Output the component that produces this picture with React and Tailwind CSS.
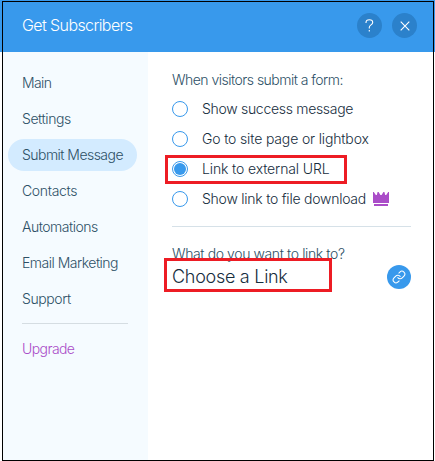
const navItems = [
  { label: "Main", tracking: "tracking-[-0.6px]" },
  { label: "Settings", tracking: "tracking-[-0.42px]" },
  { label: "Submit Message", tracking: "tracking-[-0.54px]", active: true },
  { label: "Contacts", tracking: "tracking-[-0.34px]" },
  { label: "Automations", tracking: "tracking-[-0.48px]" },
  { label: "Email Marketing", tracking: "tracking-[-0.5px]" },
  { label: "Support", tracking: "tracking-[-0.42px]" },
];

const options = [
  { label: "Show success message", tracking: "tracking-[-0.3px]" },
  { label: "Go to site page or lightbox", tracking: "tracking-[-0.15px]" },
  { label: "Link to external URL", tracking: "tracking-[-0.13px]", selected: true },
  { label: "Show link to file download", tracking: "tracking-[-0.24px]", premium: true },
];

function Header() {
  return (
    <header className="flex h-[52px] shrink-0 items-center bg-[#3899ec] pl-[22px] pr-[18px] text-white">
      <h1 className="grow whitespace-nowrap pb-[3px] text-[16px] font-light leading-6 tracking-[-0.6px]">Get Subscribers</h1>
      <div className="flex gap-[10px] pb-px">
        <button className="flex size-[25px] items-center justify-center rounded-full bg-[#2b81cb]" aria-label="Help">
          <svg width="9" height="13" viewBox="0 0 9 13" fill="none" stroke="white" strokeWidth="1.1">
            <path d="M1 4V3.5C1 1.7 2.4.7 4.3.7S7.7 1.8 7.7 3.4C7.7 5.7 4.3 6 4.3 8.3V9.5M4.3 11V12.5" />
          </svg>
        </button>
        <button className="flex size-[25px] items-center justify-center rounded-full bg-[#2b81cb]" aria-label="Close">
          <svg width="10" height="10" viewBox="0 0 10 10" fill="none" stroke="white" strokeWidth="1.1">
            <path d="M.7.7 9.3 9.3M9.3.7.7 9.3" />
          </svg>
        </button>
      </div>
    </header>
  );
}

function Sidebar() {
  return (
    <nav className="ml-[2px] flex w-[146px] shrink-0 flex-col bg-[#f5fbff] pl-[6px] pt-[15px] text-[14px] font-light text-[#2d5066]">
      <ul className="flex flex-col gap-1">
        {navItems.map((item) => (
          <li
            key={item.label}
            className={`flex h-8 w-[129px] items-center whitespace-nowrap rounded-full pb-px pl-[14px] ${item.tracking} ${item.active ? "bg-[#d3ebff]" : ""}`}
          >
            {item.label}
          </li>
        ))}
      </ul>
      <hr className="ml-[14px] mt-2 w-[106px] border-[#d5dde2]" />
      <a className="ml-[14px] mt-[9px] flex h-8 items-center pb-[2px] tracking-[-0.58px] text-[#aa4dc8]">Upgrade</a>
    </nav>
  );
}

function Radio({ selected }) {
  return (
    <span className="flex size-4 shrink-0 items-center justify-center rounded-full border border-[#3899ec] bg-white">
      {selected && <span className="size-3 rounded-full bg-[#3899ec]" />}
    </span>
  );
}

function Crown() {
  return (
    <svg className="ml-[7px] shrink-0" width="16" height="14" viewBox="0 0 16 14" fill="#aa4dc8">
      <path d="M0 0H.8L2.8 3H3.8L4.6 0H5.6L7.4 3H8.6L10.4 0H11.4L12.2 3H13.2L15.2 0H16V11H0ZM1 12H15V14H1Z" />
    </svg>
  );
}

function Settings() {
  return (
    <main className="flex grow flex-col bg-white pl-6 pr-6 pt-[17px]">
      <p className="h-[25px] whitespace-nowrap text-[14px] font-light leading-[21px] tracking-[-0.52px] text-[#2d5066]">
        When visitors submit a form:
      </p>
      <div className="flex flex-col">
        {options.map((option) => (
          <label key={option.label} className="relative flex h-[30px] items-center text-[14px] font-light text-[#162d3d]">
            <Radio selected={option.selected} />
            <span className={`ml-[14px] whitespace-nowrap pb-px ${option.tracking}`}>{option.label}</span>
            {option.premium && <Crown />}
            {option.selected && <span className="absolute left-[-7px] top-[1px] h-[29px] w-[182px] border-[3px] border-[#ed1c24]" />}
          </label>
        ))}
      </div>
      <hr className="mt-[12px] border-[#d6e1e8]" />
      <p className="mt-[16px] h-[22px] whitespace-nowrap text-[14px] font-light leading-[22px] tracking-[-0.39px] text-[#2d5066]">
        What do you want to link to?
      </p>
      <div className="relative flex h-6 items-center justify-between">
        <span className="whitespace-nowrap text-[18px] font-light leading-6 tracking-[-0.28px] text-[#162d3d]">Choose a Link</span>
        <button className="flex size-6 items-center justify-center rounded-full bg-[#3899ec]" aria-label="Edit link">
          <svg width="14" height="14" viewBox="0 0 24 24" fill="none" stroke="white" strokeWidth="1.8" strokeLinecap="round" strokeLinejoin="round">
            <path d="M10 13a5 5 0 0 0 7.54.54l3-3a5 5 0 0 0-7.07-7.07l-1.72 1.71" />
            <path d="M14 11a5 5 0 0 0-7.54-.54l-3 3a5 5 0 0 0 7.07 7.07l1.71-1.71" />
          </svg>
        </button>
        <span className="absolute left-[-8px] top-[-7px] h-[34px] w-[168px] border-[3px] border-[#ed1c24]" />
      </div>
    </main>
  );
}

export default function App() {
  return (
    <div className="relative flex h-[461px] w-[435px] flex-col overflow-hidden bg-white font-['Inter','Liberation_Sans',sans-serif]">
      <Header />
      <div className="flex grow">
        <Sidebar />
        <Settings />
      </div>
      <div className="pointer-events-none absolute bottom-0 left-[2px] right-[1px] top-[1px] border border-black" />
    </div>
  );
}
